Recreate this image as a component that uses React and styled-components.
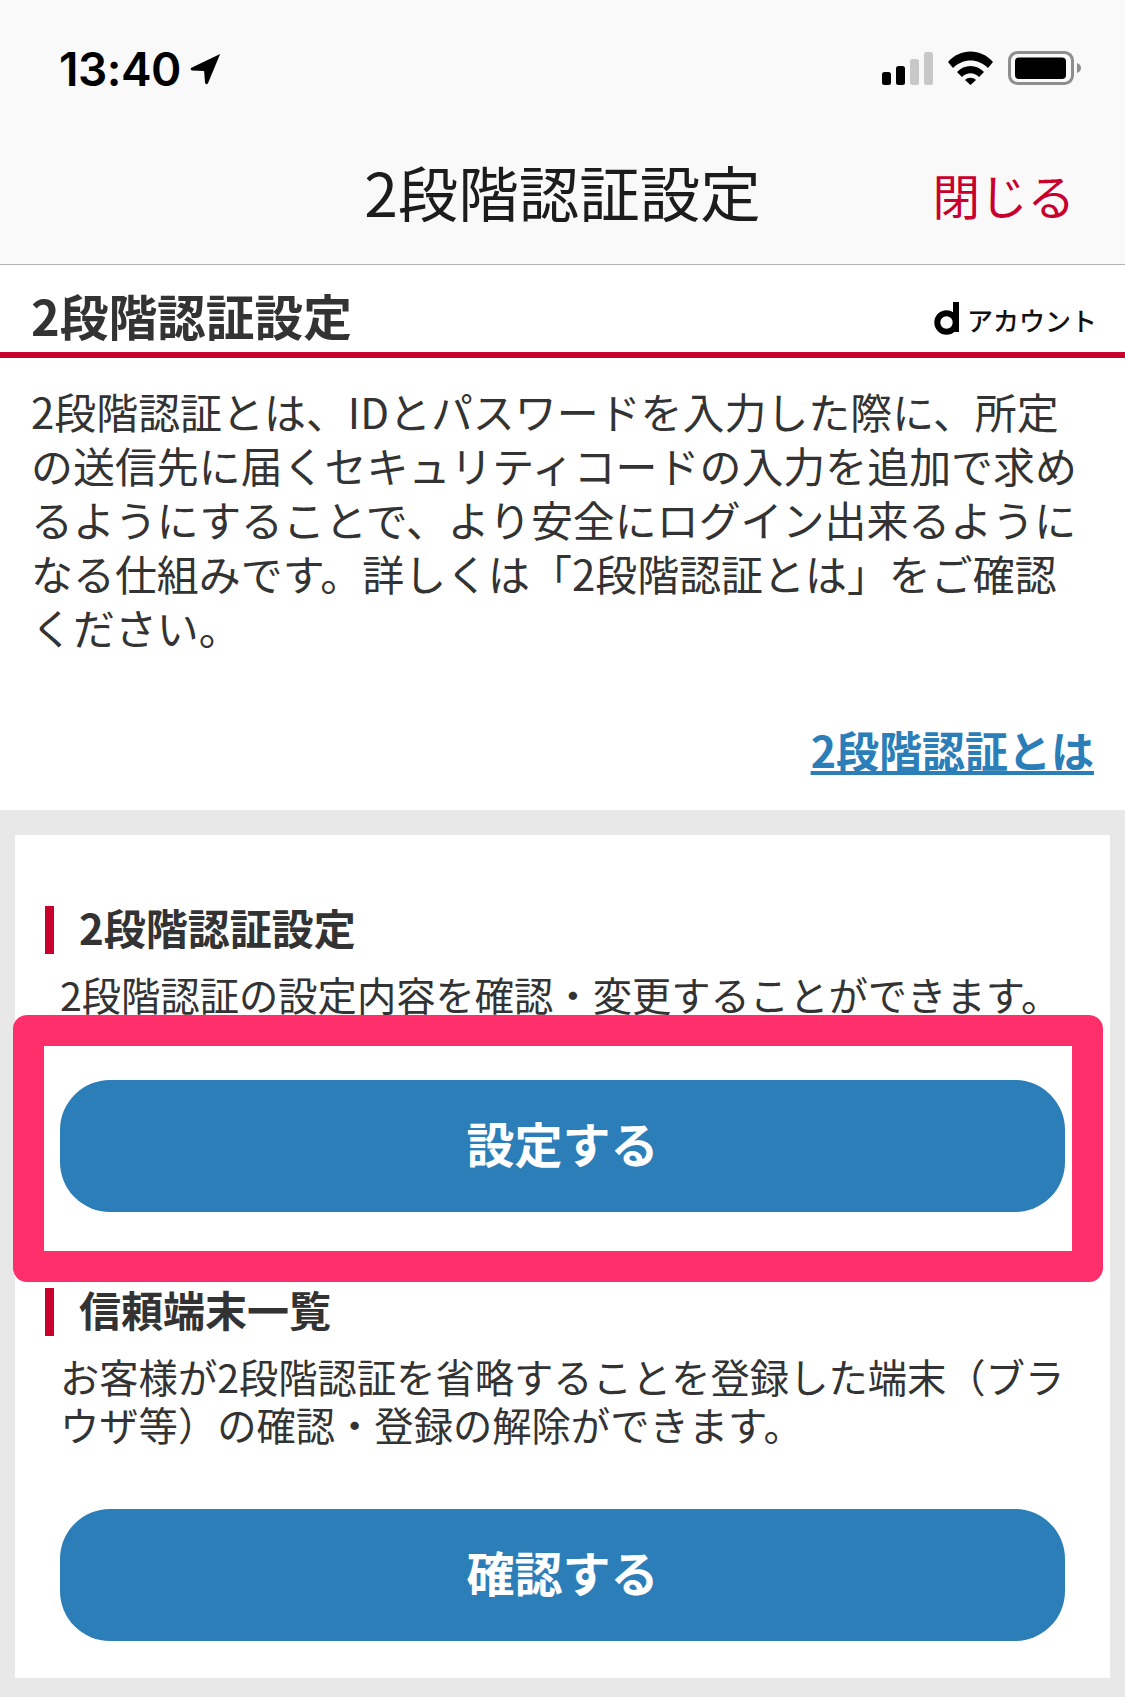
import React from 'react';
import styled, { createGlobalStyle } from 'styled-components';

const GlobalStyle = createGlobalStyle`
  html, body {
    margin: 0;
    padding: 0;
    background: #fff;
  }
  body {
    font-family: "Liberation Sans", "Noto Sans CJK JP", sans-serif;
    color: #333;
  }
  * {
    box-sizing: border-box;
  }
`;

const Page = styled.div`
  width: 1125px;
  height: 1697px;
  overflow: hidden;
  display: flex;
  flex-direction: column;
`;

const TopBar = styled.header`
  height: 265px;
  flex: none;
  background: #f9f9f9;
  border-bottom: 1px solid #b4b4b4;
  display: flex;
  flex-direction: column;
`;

const StatusBar = styled.div`
  height: 132px;
  padding: 47px 44px 0 59px;
  display: flex;
  justify-content: space-between;
  align-items: flex-start;
`;

const Clock = styled.div`
  display: flex;
  align-items: center;
  gap: 9px;
  font-family: Inter, "Liberation Sans", sans-serif;
  font-size: 46px;
  font-weight: 600;
  line-height: 44px;
  letter-spacing: -0.5px;
  color: #000;
`;

const StatusIcons = styled.div`
  display: flex;
  align-items: center;
  gap: 15px;
  padding-top: 4px;
`;

const NavRow = styled.div`
  position: relative;
  height: 100px;
  display: flex;
  align-items: center;
  justify-content: center;
`;

const NavTitle = styled.div`
  font-family: "Noto Sans CJK JP", sans-serif;
  font-size: 60.5px;
  font-weight: 400;
  color: #1c1c1c;
  line-height: 1;
  margin-top: 18px;
`;

const CloseLink = styled.a`
  position: absolute;
  right: 50px;
  top: 36px;
  font-family: "Noto Sans CJK JP", sans-serif;
  font-size: 47.5px;
  line-height: 54px;
  color: #c9002e;
`;

const PageHead = styled.div`
  height: 93px;
  flex: none;
  padding: 0 28px 0 31px;
  border-bottom: 6px solid #c8002e;
  display: flex;
  justify-content: space-between;
  align-items: center;
`;

const PageTitle = styled.h1`
  margin: 0;
  padding-top: 13px;
  font-family: "Noto Sans CJK JP", sans-serif;
  font-size: 48.7px;
  font-weight: 700;
  line-height: 1;
  color: #333;
`;

const Brand = styled.div`
  display: flex;
  align-items: flex-end;
  gap: 7px;
  padding-top: 20px;
`;

const BrandText = styled.span`
  font-family: "Noto Sans CJK JP", sans-serif;
  font-size: 26px;
  font-weight: 500;
  color: #111;
  line-height: 30px;
`;

const Intro = styled.section`
  height: 452px;
  flex: none;
  padding: 26px 31px 0;
  display: flex;
  flex-direction: column;
`;

const IntroLine = styled.div`
  font-family: "Noto Sans CJK JP", sans-serif;
  font-size: 41.95px;
  line-height: 54px;
  white-space: nowrap;
  color: #333;
`;

const IntroLink = styled.a`
  margin-top: 68px;
  align-self: flex-end;
  font-family: "Noto Sans CJK JP", sans-serif;
  font-size: 43px;
  font-weight: 700;
  line-height: 54px;
  color: #2b7eb8;
  text-decoration: underline;
`;

const Panel = styled.main`
  flex: 1;
  background: #e8e8e8;
  padding: 25px 15px 19px;
  display: flex;
`;

const Card = styled.div`
  flex: 1;
  background: #fff;
  padding: 71px 30px 0;
  display: flex;
  flex-direction: column;
`;

const Block = styled.div`
  display: flex;
  flex-direction: column;
  margin-top: ${(p) => p.$top || 0}px;
`;

const BlockTitle = styled.h2`
  margin: 0;
  height: 48px;
  border-left: 9px solid #c8002e;
  padding-left: 25px;
  font-family: "Noto Sans CJK JP", sans-serif;
  font-size: 42px;
  font-weight: 700;
  line-height: 41px;
  color: #333;
`;

const BlockText = styled.p`
  margin: 16px 0 0;
  padding-left: 15px;
  font-family: "Noto Sans CJK JP", sans-serif;
  font-size: 39.3px;
  line-height: 48px;
  color: #333;
  white-space: pre-line;
`;

const ButtonWrap = styled.div`
  position: relative;
  margin-top: ${(p) => p.$top}px;
  padding-left: 15px;
`;

const PillButton = styled.button`
  display: block;
  width: 1005px;
  height: 132px;
  border: 0;
  padding: 0 0 8px;
  border-radius: 50px;
  background: #2b7eb8;
  color: #fff;
  font-family: "Noto Sans CJK JP", sans-serif;
  font-size: 48px;
  font-weight: 700;
  position: relative;
`;

const Highlight = styled.div`
  position: absolute;
  left: -32px;
  top: -65px;
  width: 1090px;
  height: 267px;
  border: 31px solid #ff2f6b;
  border-radius: 14px;
  pointer-events: none;
`;

const LocationIcon = () => (
  <svg width="32" height="32" viewBox="0 0 34 34">
    <path d="M32 1 L1 16 Q0 18 2 18.5 L15 19 L16 32 Q17 34 19 32.5 Z" fill="#000" />
  </svg>
);

const SignalIcon = () => (
  <svg width="51" height="34" viewBox="0 0 51 34">
    <rect x="0" y="21" width="9" height="13" rx="2.5" fill="#000" />
    <rect x="14" y="15" width="9" height="19" rx="2.5" fill="#000" />
    <rect x="28" y="8" width="9" height="26" rx="2.5" fill="#c8c8c8" />
    <rect x="42" y="1" width="9" height="33" rx="2.5" fill="#c8c8c8" />
  </svg>
);

const WifiIcon = () => (
  <svg width="45" height="34" viewBox="0 0 45 34">
    <path d="M0 11 C12 -3 33 -3 45 11 L40 17 C30 7 15 7 5 17 Z" fill="#000" />
    <path d="M9 21 C16 13 29 13 36 21 L31 26 C26 21 19 21 14 26 Z" fill="#000" />
    <path d="M17 29 C20 26 25 26 28 29 L22.5 34 Z" fill="#000" />
  </svg>
);

const BatteryIcon = () => (
  <svg width="73" height="34" viewBox="0 0 73 34">
    <rect x="1.5" y="1.5" width="63" height="31" rx="8" fill="none" stroke="#8e8e8e" strokeWidth="3" />
    <rect x="7" y="6.5" width="51" height="21.5" rx="4" fill="#000" />
    <path d="M69 12 C72 13 73 15 73 17 C73 19 72 21 69 22 Z" fill="#8e8e8e" />
  </svg>
);

const DLogo = () => (
  <svg width="26" height="33" viewBox="0 0 26 33">
    <circle cx="12.5" cy="20.5" r="9.2" fill="none" stroke="#000" strokeWidth="6" />
    <rect x="19" y="0" width="6" height="30" fill="#000" />
  </svg>
);

const introLines = [
  '2段階認証とは、IDとパスワードを入力した際に、所定',
  'の送信先に届くセキュリティコードの入力を追加で求め',
  'るようにすることで、より安全にログイン出来るように',
  'なる仕組みです。詳しくは「2段階認証とは」をご確認',
  'ください。',
];

export default function App() {
  return (
    <Page>
      <GlobalStyle />
      <TopBar>
        <StatusBar>
          <Clock>
            13:40
            <LocationIcon />
          </Clock>
          <StatusIcons>
            <SignalIcon />
            <WifiIcon />
            <BatteryIcon />
          </StatusIcons>
        </StatusBar>
        <NavRow>
          <NavTitle>2段階認証設定</NavTitle>
          <CloseLink>閉じる</CloseLink>
        </NavRow>
      </TopBar>

      <PageHead>
        <PageTitle>2段階認証設定</PageTitle>
        <Brand>
          <DLogo />
          <BrandText>アカウント</BrandText>
        </Brand>
      </PageHead>

      <Intro>
        {introLines.map((line) => (
          <IntroLine key={line}>{line}</IntroLine>
        ))}
        <IntroLink>2段階認証とは</IntroLink>
      </Intro>

      <Panel>
        <Card>
          <Block>
            <BlockTitle>2段階認証設定</BlockTitle>
            <BlockText>2段階認証の設定内容を確認・変更することができます。</BlockText>
            <ButtonWrap $top={62}>
              <PillButton>設定する</PillButton>
              <Highlight />
            </ButtonWrap>
          </Block>
          <Block $top={76}>
            <BlockTitle>信頼端末一覧</BlockTitle>
            <BlockText>
              {'お客様が2段階認証を省略することを登録した端末（ブラ\nウザ等）の確認・登録の解除ができます。'}
            </BlockText>
            <ButtonWrap $top={61}>
              <PillButton>確認する</PillButton>
            </ButtonWrap>
          </Block>
        </Card>
      </Panel>
    </Page>
  );
}
